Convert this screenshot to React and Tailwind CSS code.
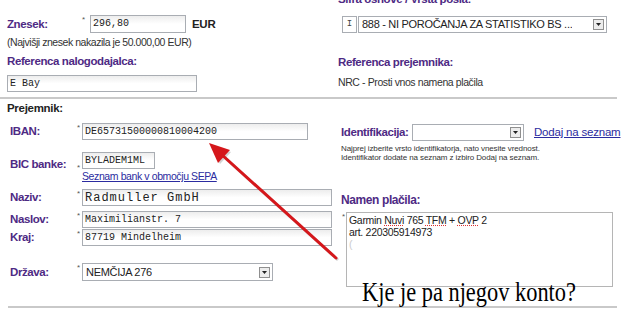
import React from 'react';

const label = "font-['Liberation_Sans',Arial,sans-serif] font-bold text-[11.5px] leading-[13px] tracking-[-0.4px] text-[#4e2a84]";
const mono = "font-['Liberation_Mono','Courier_New',monospace] text-[10px] leading-[12px] text-[#222]";
const inputBox = "h-[17px] border border-[#a9adb3] bg-gradient-to-b from-[#ededed] via-white to-white flex items-center pl-[2px] overflow-hidden whitespace-nowrap";

function DropBtn() {
  return (
    <span className="w-[11px] h-[11px] border border-[#8f8f8f] bg-[#ececec] flex items-center justify-center">
      <svg width="5" height="3" viewBox="0 0 5 3"><path d="M0 0h5L2.5 3z" fill="#222" /></svg>
    </span>
  );
}

function Select({ className, text }) {
  return (
    <div className={`h-[17px] border border-[#a9adb3] bg-white flex items-center justify-between pl-[3px] pr-[2px] ${className}`}>
      <span className="text-[11px] leading-[13px] tracking-[-0.3px] text-[#222] whitespace-nowrap overflow-hidden">{text}</span>
      <DropBtn />
    </div>
  );
}

function Star({ className = '' }) {
  return <span className={`block text-[8px] leading-[8px] text-[#555] ${className}`}>*</span>;
}

function Row({ name, children, className = '' }) {
  return (
    <div className={`flex items-center text-[8px] leading-none ${className}`}>
      <span className={`${label} w-[70px] pl-[3px]`}>{name}</span>
      <span className="w-[5px] self-start pt-[1px]"><Star /></span>
      {children}
    </div>
  );
}

export default function App() {
  return (
    <div className="relative w-[640px] h-[315px] overflow-hidden bg-white font-['Liberation_Sans',Arial,sans-serif] text-[#222]">
      {/* top section */}
      <div className="flex h-[97px]">
        <div className="w-[338px] pl-[7px] pt-[15px]">
          <div className="flex items-center h-[18px] text-[8px] leading-none">
            <span className={`${label} w-[75px]`}>Znesek:</span>
            <span className="w-[8px] self-start pt-[1px]"><Star /></span>
            <div className={`${inputBox} w-[96px] h-[18px]`}>
              <span className={mono}>296,80</span>
            </div>
            <span className="ml-[6px] font-bold text-[11.5px] leading-[13px] tracking-[-0.3px] text-[#222]">EUR</span>
          </div>
          <div className="mt-[3px] text-[10.5px] leading-[12px] tracking-[-0.45px] text-[#333]">
            (Najvišji znesek nakazila je 50.000,00 EUR)
          </div>
          <div className={`${label} mt-[7px]`}>Referenca nalogodajalca:</div>
          <div className={`${inputBox} mt-[7px] w-[190px]`}>
            <span className={mono}>E Bay</span>
          </div>
        </div>
        <div className="flex-1">
          <div className={`${label} mt-[-7px]`}>Šifra osnove / Vrsta posla:</div>
          <div className="flex mt-[10px] ml-[4px] gap-[1px]">
            <div className="w-[15px] h-[17px] border border-[#a9adb3] flex items-center justify-center">
              <span className="font-['Liberation_Mono',monospace] text-[9px] leading-none text-[#444]">I</span>
            </div>
            <Select className="w-[249px]" text="888 - NI POROČANJA ZA STATISTIKO BS ..." />
          </div>
          <div className={`${label} mt-[23px]`}>Referenca prejemnika:</div>
          <div className="mt-[7px] text-[10.5px] leading-[13px] tracking-[-0.4px] text-[#333]">
            NRC - Prosti vnos namena plačila
          </div>
        </div>
      </div>
      <div className="h-[2px] w-[617px] bg-[#c9c9c9]" />

      {/* recipient section */}
      <div className="flex h-[207px]">
        <div className="w-[338px] pl-[7px] pt-[3px]">
          <div className="font-bold text-[11.5px] leading-[13px] tracking-[-0.3px] text-[#222]">Prejemnik:</div>
          <Row name="IBAN:" className="mt-[8px]">
            <div className={`${inputBox} w-[226px]`}>
              <span className={mono}>DE65731500000810004200</span>
            </div>
          </Row>
          <div className="flex items-center mt-[12px] text-[8px] leading-none">
            <span className={`${label} w-[70px] pl-[3px] mt-[-6px]`}>BIC banke:</span>
            <span className="w-[5px] pt-[2px]"><Star /></span>
            <div className="flex flex-col">
              <div className={`${inputBox} w-[73px]`}>
                <span className={`${mono} text-[9.5px]`}>BYLADEM1ML</span>
              </div>
              <a className="mt-[2px] text-[10.5px] leading-[11px] tracking-[-0.4px] text-[#2b2ba0] underline">
                Seznam bank v območju SEPA
              </a>
            </div>
          </div>
          <Row name="Naziv:" className="mt-[7px]">
            <div className={`${inputBox} w-[250px]`}>
              <span className={`${mono} text-[12px] leading-[12px] tracking-[1px]`}>Radmuller GmbH</span>
            </div>
          </Row>
          <Row name="Naslov:" className="mt-[5px]">
            <div className={`${inputBox} w-[250px]`}>
              <span className={mono}>Maximilianstr. 7</span>
            </div>
          </Row>
          <Row name="Kraj:" className="mt-[1px]">
            <div className={`${inputBox} w-[250px]`}>
              <span className={mono}>87719 Mindelheim</span>
            </div>
          </Row>
          <Row name="Država:" className="mt-[17px]">
            <Select className="w-[191px] h-[18px]" text="NEMČIJA 276" />
          </Row>
        </div>
        <div className="flex-1 pl-[3px]">
          <div className="flex items-center mt-[25px]">
            <span className={`${label} w-[71px]`}>Identifikacija:</span>
            <Select className="w-[112px]" text="" />
            <a className="ml-[10px] text-[11.5px] leading-[13px] tracking-[-0.2px] text-[#2b2ba0] underline">Dodaj na seznam</a>
          </div>
          <div className="mt-[3px] text-[8px] leading-[9px] tracking-[-0.1px] text-[#333]">
            <div>Najprej izberite vrsto identifikatorja, nato vnesite vrednost.</div>
            <div>Identifikator dodate na seznam z izbiro Dodaj na seznam.</div>
          </div>
          <div className={`${label} text-[12px] leading-[14px] mt-[31px]`}>Namen plačila:</div>
          <div className="flex mt-[5px] text-[8px] leading-none">
            <span className="w-[5px] pl-[1px] pt-[1px]"><Star /></span>
            <div className="w-[267px] h-[75px] border border-[#b5b5b5] px-[2px] pt-[1px] text-[10.5px] leading-[12px] tracking-[-0.3px] text-[#222]">
              <div>
                Garmin <span className="underline decoration-dotted decoration-[#d33]">Nuvi</span> 765{' '}
                <span className="underline decoration-dotted decoration-[#d33]">TFM</span> +{' '}
                <span className="underline decoration-dotted decoration-[#d33]">OVP</span> 2
              </div>
              <div>art. 220305914973</div>
              <div className="text-[#ccc]">(</div>
            </div>
          </div>
        </div>
      </div>
      <div className="ml-[8px] h-[2px] w-[609px] bg-[#c9c9c9]" />

      {/* annotation text */}
      <div className="absolute left-[362px] top-[276px] origin-left scale-x-[0.8] whitespace-nowrap font-['Liberation_Serif','Times_New_Roman',serif] text-[28px] leading-[32px] text-black">
        Kje je pa njegov konto?
      </div>

      {/* arrow */}
      <svg className="absolute left-0 top-0" width="640" height="315" viewBox="0 0 640 315">
        <g transform="translate(2 2)" opacity="0.25">
          <line x1="336" y1="258" x2="221" y2="154" stroke="#555" strokeWidth="3" />
          <polygon points="209,143 229,150 218,162" fill="#555" />
        </g>
        <line x1="336" y1="258" x2="221" y2="154" stroke="#d5171b" strokeWidth="3" strokeLinecap="round" />
        <polygon points="209,143 230,150 218,163" fill="#d5171b" />
      </svg>
    </div>
  );
}
